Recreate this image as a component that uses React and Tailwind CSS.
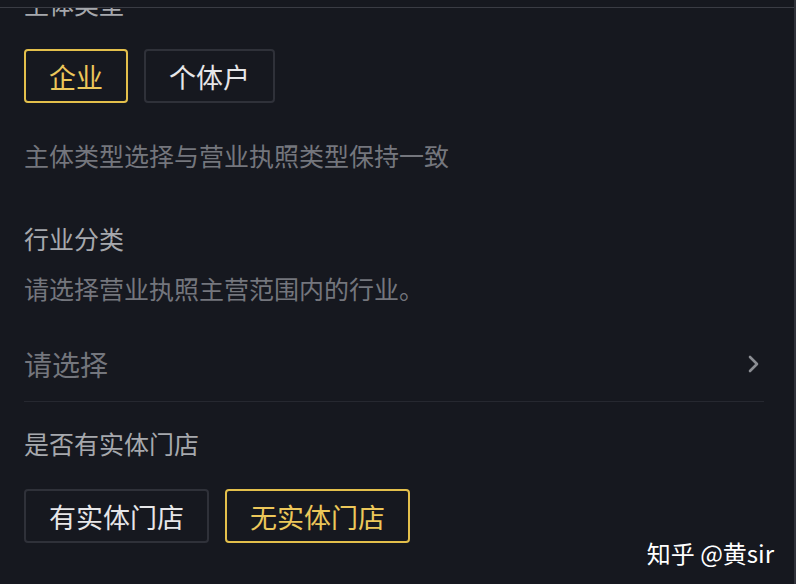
import React, { useState } from 'react';

const FONT = { fontFamily: '"Noto Sans CJK SC", "Noto Sans", sans-serif' };

const OptionButton = ({ label, active, onClick }) => (
    <button
        onClick={onClick}
        className={`h-[54px] px-[23px] rounded-[4px] text-[27px] leading-none ${active ? 'border-2 border-[#e3bf4b] text-[#ecc75a]' : 'border-2 border-[#2f3139] text-[#e6e6e8]'}`}
    >
        {label}
    </button>
);

const App = () => {
    const [entity, setEntity] = useState('企业');
    const [store, setStore] = useState('无实体门店');

    return (
        <div className="w-[796px] h-[584px] bg-[#16181f] relative overflow-hidden flex flex-col border-r-2 border-[#30323a]" style={FONT}>
            <div className="h-[8px] shrink-0 border-b border-[#3a3c44] relative z-10 bg-[#16181f]"></div>

            <div className="flex-1 overflow-hidden px-[24px] pr-[30px]">
                <div className="mt-[-17px] text-[25px] leading-[25px] text-[#a6a8ad]">主体类型</div>

                <div className="flex gap-[16px] mt-[33px]">
                    {['企业', '个体户'].map(t => (
                        <OptionButton key={t} label={t} active={entity === t} onClick={() => setEntity(t)} />
                    ))}
                </div>

                <div className="mt-[40px] text-[25px] leading-[25px] text-[#74767d]">主体类型选择与营业执照类型保持一致</div>

                <div className="mt-[58px] text-[25px] leading-[25px] text-[#a6a8ad]">行业分类</div>
                <div className="mt-[25px] text-[25px] leading-[25px] text-[#74767d]">请选择营业执照主营范围内的行业。</div>

                <div className="flex items-center justify-between pt-[49px] pb-[23px] border-b border-[#262830]">
                    <span className="text-[28px] leading-[28px] text-[#74767d]">请选择</span>
                    <svg width="14" height="18" viewBox="0 0 14 18" className="mr-[3px]">
                        <path d="M3 2 L10 9 L3 16" fill="none" stroke="#8b8d93" strokeWidth="2.6" strokeLinecap="round" strokeLinejoin="round" />
                    </svg>
                </div>

                <div className="mt-[29px] text-[25px] leading-[25px] text-[#a6a8ad]">是否有实体门店</div>

                <div className="flex gap-[16px] mt-[33px]">
                    {['有实体门店', '无实体门店'].map(t => (
                        <OptionButton key={t} label={t} active={store === t} onClick={() => setStore(t)} />
                    ))}
                </div>
            </div>

            {/* watermark */}
            <div className="absolute right-[20px] bottom-[17px] text-[24px] leading-[28px] text-white">知乎 @黄sir</div>
        </div>
    );
};

export default App;
